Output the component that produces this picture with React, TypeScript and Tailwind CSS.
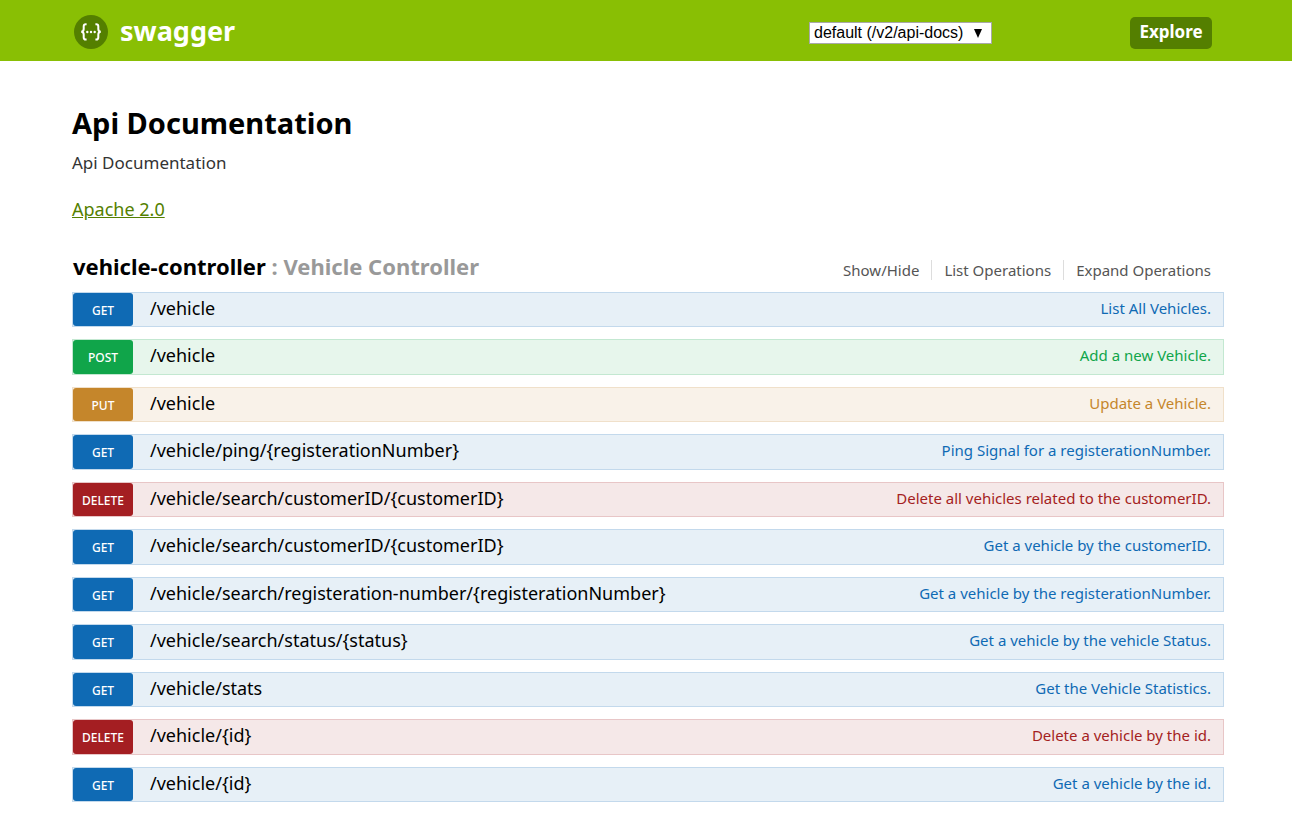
import React from "react";

type Method = "GET" | "POST" | "PUT" | "DELETE";

const styles: Record<Method, { row: string; badge: string; text: string }> = {
  GET: { row: "bg-[#e7f0f7] border-[#c3d9ec]", badge: "bg-[#0f6ab4]", text: "text-[#0f6ab4]" },
  POST: { row: "bg-[#e7f6ec] border-[#c3e8d1]", badge: "bg-[#10a54a]", text: "text-[#10a54a]" },
  PUT: { row: "bg-[#f9f2e9] border-[#f0e0ca]", badge: "bg-[#c5862b]", text: "text-[#c5862b]" },
  DELETE: { row: "bg-[#f5e8e8] border-[#e8c6c7]", badge: "bg-[#a41e22]", text: "text-[#a41e22]" },
};

const operations: { method: Method; path: string; summary: string }[] = [
  { method: "GET", path: "/vehicle", summary: "List All Vehicles." },
  { method: "POST", path: "/vehicle", summary: "Add a new Vehicle." },
  { method: "PUT", path: "/vehicle", summary: "Update a Vehicle." },
  { method: "GET", path: "/vehicle/ping/{registerationNumber}", summary: "Ping Signal for a registerationNumber." },
  { method: "DELETE", path: "/vehicle/search/customerID/{customerID}", summary: "Delete all vehicles related to the customerID." },
  { method: "GET", path: "/vehicle/search/customerID/{customerID}", summary: "Get a vehicle by the customerID." },
  { method: "GET", path: "/vehicle/search/registeration-number/{registerationNumber}", summary: "Get a vehicle by the registerationNumber." },
  { method: "GET", path: "/vehicle/search/status/{status}", summary: "Get a vehicle by the vehicle Status." },
  { method: "GET", path: "/vehicle/stats", summary: "Get the Vehicle Statistics." },
  { method: "DELETE", path: "/vehicle/{id}", summary: "Delete a vehicle by the id." },
  { method: "GET", path: "/vehicle/{id}", summary: "Get a vehicle by the id." },
];

function Logo() {
  return (
    <svg viewBox="0 0 34 34" className="size-[34px]" fill="none" aria-hidden="true">
      <circle cx="17" cy="17" r="17" fill="#547f00" />
      <g stroke="#fff" strokeWidth="2">
        <path d="M12.6 9.2h-.8c-1.5 0-2.1.7-2.1 2.1v2.8c0 1.6-.6 2.5-2.4 2.7 1.8.2 2.4 1.1 2.4 2.7v3c0 1.4.6 2.1 2.1 2.1h.8" />
        <path d="M21.4 9.2h.8c1.5 0 2.1.7 2.1 2.1v2.8c0 1.6.6 2.5 2.4 2.7-1.8.2-2.4 1.1-2.4 2.7v3c0 1.4-.6 2.1-2.1 2.1h-.8" />
      </g>
      <g fill="#fff">
        <circle cx="13.3" cy="17" r="1.2" />
        <circle cx="17" cy="17" r="1.2" />
        <circle cx="20.7" cy="17" r="1.2" />
      </g>
    </svg>
  );
}

function Header() {
  return (
    <header className="flex h-[61px] items-center bg-[#89bf04] pt-1 pr-20 pl-[74px]">
      <a href="#" className="flex items-center gap-3 pb-0.5 text-[27px] leading-8 font-bold text-white">
        <Logo />
        <span className="pb-0.5">swagger</span>
      </a>
      <form className="ml-auto flex items-center gap-[138px]" onSubmit={(e) => e.preventDefault()}>
        <div className="relative flex">
          <select
            aria-label="API definition"
            className="h-[22px] w-[183px] appearance-none border border-[#a9a9a9] bg-white pl-1 font-['Liberation_Sans',sans-serif] text-base leading-5 text-black"
          >
            <option>default (/v2/api-docs)</option>
          </select>
          <svg viewBox="0 0 8 9" className="pointer-events-none absolute top-[7px] right-[10px] h-[9px] w-2" aria-hidden="true">
            <path d="M0 0h8L4 9z" fill="#000" />
          </svg>
        </div>
        <button type="submit" className="h-8 w-[82px] rounded-[5px] bg-[#547f00] pb-0.5 text-[17px] leading-6 font-bold text-white">
          Explore
        </button>
      </form>
    </header>
  );
}

export default function App() {
  return (
    <div className="min-h-screen bg-white font-['Noto_Sans',sans-serif] text-black">
      <Header />
      <main className="pt-11 pr-[68px] pb-6 pl-[72px]">
        <h1 className="text-[29px] leading-9 font-bold">Api Documentation</h1>
        <p className="mt-2 text-[17px] leading-7 text-[#333333]">Api Documentation</p>
        <p className="mt-4 text-lg leading-8">
          <a href="#" className="text-[#547f00] underline">Apache 2.0</a>
        </p>

        <section>
          <div className="mt-[25px] mb-2 flex items-end justify-between pr-[13px] pl-px">
            <h2 className="pb-0.5 text-[22px] leading-8 font-bold text-[#999999]">
              <a href="#" className="text-black">vehicle-controller</a> : Vehicle Controller
            </h2>
            <ul className="flex items-center pb-1 text-[15px] leading-5 text-[#555555]">
              <li className="border-r border-[#dddddd] pr-3"><a href="#">Show/Hide</a></li>
              <li className="border-r border-[#dddddd] px-3"><a href="#">List Operations</a></li>
              <li className="pl-3"><a href="#">Expand Operations</a></li>
            </ul>
          </div>
          <ul className="flex flex-col gap-3">
            {operations.map((op, i) => {
              const s = styles[op.method];
              return (
                <li key={i} className={`flex items-stretch border odd:h-[35px] even:h-9 ${s.row}`}>
                  <a href="#" className={`flex w-[60px] items-center justify-center rounded-[3px] pt-0.5 text-xs font-medium text-white ${s.badge}`}>
                    {op.method}
                  </a>
                  <a href="#" className="pl-[17px] text-lg leading-[30px]">{op.path}</a>
                  <a href="#" className={`ml-auto pr-3 text-[15px] leading-[30px] ${s.text}`}>{op.summary}</a>
                </li>
              );
            })}
          </ul>
        </section>
      </main>
    </div>
  );
}
